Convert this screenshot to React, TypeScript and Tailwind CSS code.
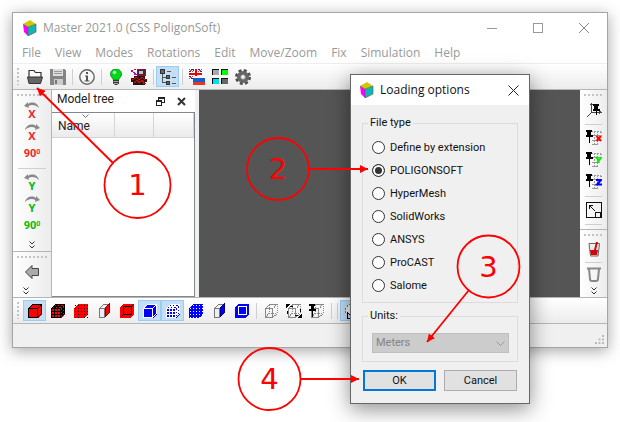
import type { ReactNode } from "react";

const UI = "font-['Open_Sans','Noto_Sans',sans-serif]";
const PANEL = "font-[Roboto,'Liberation_Sans',sans-serif]";

function Svg({ size = 16, children, crisp = true }: { size?: number; children: ReactNode; crisp?: boolean }) {
  return (
    <svg
      width={size}
      height={size}
      viewBox={`0 0 ${size} ${size}`}
      fill="none"
      aria-hidden="true"
      shapeRendering={crisp ? "crispEdges" : "auto"}
      className="shrink-0"
    >
      {children}
    </svg>
  );
}

function LogoCube() {
  return (
    <Svg crisp={false}>
      <path d="M1 4 L6 7 L6 16 L2 12 Z" fill="#f0f" />
      <path d="M6 7 L14 4 L14 12 L6 16 Z" fill="#12b5b5" />
      <path d="M1 4 L8 0 L14 4 L6 7 Z" fill="#d2c800" />
      <path d="M6 7 L14 4 L14 12 L6 16 Z M6 7 L1 4" stroke="#555" strokeWidth="0.6" />
    </Svg>
  );
}

type CubeProps = { fill: string; line: string; kind: "solid" | "grid" | "dots" | "side" | "frame" };

function Cube({ fill, line, kind }: CubeProps) {
  if (kind === "side") {
    return (
      <Svg>
        <path d="M3.5 5.5 H8.5 V14.5 H3.5 Z M3.5 5.5 L7.5 1.5 H12.5" stroke="#777" fill="#eee" />
        <path d="M9 5 L13 1 V10 L9 14 Z" fill={fill} stroke={line} strokeWidth="1" />
      </Svg>
    );
  }
  if (kind === "frame") {
    return (
      <Svg>
        <path d="M1 5 L4 1 H15 V11 L12 15 H1 Z" fill={fill} />
        <path d="M4.5 3.5 H12.5 V11.5 H4.5 Z" stroke={line} />
        {line !== "#fff" && <path d="M12.5 3.5 L14.5 1.5 M1.5 14.5 L4.5 11.5" stroke={line} />}
      </Svg>
    );
  }
  const dots: ReactNode[] = [];
  if (kind === "dots") {
    for (let y = 2; y < 15; y += 3)
      for (let x = 2; x < 15; x += 3)
        dots.push(<rect key={`${x}-${y}`} x={x} y={y} width="1" height="1" fill={line} />);
  }
  return (
    <Svg>
      <path d="M1 5 L5 1 H15 V11 L11 15 H1 Z" fill={fill} />
      {kind !== "dots" && (
        <path d="M1.5 5.5 H10.5 V14.5 H1.5 Z M1.5 5.5 L5.5 1.5 H14.5 V10.5 L10.5 14.5 M10.5 5.5 L14.5 1.5" stroke={line} />
      )}
      {kind === "grid" && (
        <path d="M4.5 5 V15 M7.5 5 V15 M1 8.5 H11 L15 4.5 M1 11.5 H11 L15 7.5 M4.5 5 L8.5 1 M7.5 5 L11.5 1 M3 3.5 H12.5 V13" stroke={line} />
      )}
      {dots}
    </Svg>
  );
}

function GhostCube({ mark }: { mark?: "rotate" | "pin" }) {
  return (
    <Svg>
      <path d="M2.5 5.5 H9.5 V14.5 H2.5 Z M2.5 5.5 L6.5 1.5 H14.5" stroke="#888" />
      <path d="M9.5 5.5 L14.5 1.5 V10.5 L9.5 14.5 M6 2 V10 L3 14 M6 10 H14" stroke="#888" strokeDasharray="1 1" />
      {mark === "rotate" && (
        <path d="M0 1 H5 L0 5 Z M16 15 H11 L16 11 Z M4 3 H7 V4 H4 Z M9 12 H12 V13 H9 Z M14 6 H15 V9 H14 Z M1 8 H2 V11 H1 Z" fill="#000" />
      )}
      {mark === "pin" && <path d="M0 1 H6 V3 H5 V6 H7 V8 H4 V14 H3 V8 H0 V6 H2 V3 H0 Z" fill="#000" />}
    </Svg>
  );
}

function Folder() {
  return (
    <Svg crisp={false}>
      <path d="M2 9 V1.500 H7 L8.500 3.500 H14 V9" stroke="#333" strokeWidth="1.200" fill="#fafafa" />
      <path d="M0.500 8 H15.500 L13.500 14.500 H2 Z" fill="#666" stroke="#333" />
    </Svg>
  );
}

function Floppy() {
  return (
    <Svg>
      <path d="M0 0 H14 L16 2 V16 H0 Z" fill="#858585" />
      <rect x="3" y="0" width="10" height="7" fill="#ddd" />
      <path d="M4 2.500 H12 M4 4.500 H12" stroke="#999" />
      <rect x="4" y="10" width="9" height="6" fill="#ccc" />
      <rect x="5" y="11" width="2" height="4" fill="#777" />
    </Svg>
  );
}

function Info() {
  return (
    <Svg crisp={false}>
      <circle cx="8" cy="8" r="7.200" stroke="#666" strokeWidth="1.400" fill="#f8f8f8" />
      <path d="M7 3 H9 V5 H7 Z M6 6.500 H9 V11.500 H10.500 V12.500 H5.500 V11.500 H7 V7.500 H6 Z" fill="#555" />
    </Svg>
  );
}

function Bulb() {
  return (
    <Svg crisp={false}>
      <path d="M8 0 C4 0 2.500 3 2.500 5 C2.500 8 5 9 5.500 11 H10.500 C11 9 13.500 8 13.500 5 C13.500 3 12 0 8 0 Z" fill="#00d81a" stroke="#087a10" strokeWidth="0.800" />
      <circle cx="6.500" cy="3.500" r="1.800" fill="#b5ffb5" />
      <path d="M5 11 H11 V15 H9.500 V16 H6.500 V15 H5 Z" fill="#333" />
      <path d="M5.500 12.500 H10.500 M5.500 14.500 H10" stroke="#ddd" strokeWidth="0.700" />
    </Svg>
  );
}

function Machine() {
  return (
    <Svg>
      <path d="M6 0 H15 V7 H6 Z" fill="#b00030" />
      <path d="M7 1 H14 V6 H7 Z" fill="#333" />
      <path d="M8 2 H12 V5 H8 Z" fill="#c8c0d8" />
      <path d="M3 7 H14 V10 H16 V13 H14 V16 H2 V13 H0 V9 H3 Z" fill="#271414" />
      <path d="M0 1 H2 V3 H0 Z M3 0 H5 V1 H3 Z M3 5 H5 V6 H3 Z" fill="#e0006a" />
      <path d="M2 11 L5 8 L8 11 L11 8 L14 11 M3 14 L6 11 L8 14 L11 11 L13 14 M1 10 H3 M12 14 H15" stroke="#e00" />
      <path d="M2 3 L6 6" stroke="#a0f" />
    </Svg>
  );
}

function TreeIcon() {
  return (
    <Svg>
      <path d="M2.500 4 V13.500 H6 M3 8.500 H6" stroke="#555" />
      <path d="M0.500 0.500 H4.500 V4.500 H0.500 Z M6.500 6.500 H9.500 V9.500 H6.500 Z M6.500 12.500 H9.500 V15.500 H6.500 Z" fill="#666" stroke="#333" />
      <path d="M7 2.500 H11 M12 8.500 H16 M12 14.500 H16" stroke="#555" />
    </Svg>
  );
}

function Flags() {
  return (
    <Svg>
      <rect width="13" height="10" fill="#17349a" />
      <path d="M0 0 L13 10 M13 0 L0 10" stroke="#fff" strokeWidth="2" />
      <path d="M0 0 L13 10 M13 0 L0 10" stroke="#d11" strokeWidth="0.800" />
      <path d="M6.500 0 V10 M0 5 H13" stroke="#fff" strokeWidth="4" />
      <path d="M6.500 0 V10 M0 5 H13" stroke="#e00" strokeWidth="2" />
      <rect x="4" y="7" width="12" height="2" fill="#f4f4f4" />
      <rect x="4" y="9" width="12" height="4" fill="#1560c8" />
      <rect x="4" y="13" width="12" height="3" fill="#e32" />
    </Svg>
  );
}

function Swatches() {
  return (
    <Svg>
      <path d="M0 6 V0 H7 V1 H1 V6 Z M9 6 V0 H16 V1 H10 V6 Z M0 15 V9 H7 V10 H1 V15 Z M9 15 V9 H16 V10 H10 V15 Z" fill="#111" />
      <rect x="1" y="1" width="6" height="5" fill="#aaa" />
      <rect x="10" y="1" width="6" height="5" fill="#0f0" />
      <rect x="1" y="10" width="6" height="5" fill="#00e0e8" />
      <rect x="10" y="10" width="6" height="5" fill="#666" />
    </Svg>
  );
}

function Gear() {
  return (
    <Svg crisp={false}>
      <circle cx="8" cy="8" r="6.500" stroke="#4c4c4c" strokeWidth="3" strokeDasharray="2.900 2.200" />
      <circle cx="8" cy="8" r="4.300" stroke="#666" strokeWidth="3.600" />
      <circle cx="8" cy="8" r="2.500" fill="#eee" stroke="#444" strokeWidth="0.600" />
    </Svg>
  );
}

function Turn({ axis, back }: { axis: "X" | "Y"; back?: boolean }) {
  const arc = back
    ? "M15 9 C14 4 8 2 4 5 L4 3 L0 7 L5 9 L4.500 7 C8 5 12 6 15 9 Z"
    : "M1 9 C2 4 8 2 12 5 L12 3 L16 7 L11 9 L11.500 7 C8 5 4 6 1 9 Z";
  return (
    <svg width="16" height="22" viewBox="0 0 16 22" aria-hidden="true" className="shrink-0 overflow-visible">
      <path d={arc} fill="#888" />
      <text
        x="8"
        y="19"
        textAnchor="middle"
        className={`font-['Open_Sans',sans-serif] text-[11px] font-bold ${axis === "X" ? "fill-[#e22]" : "fill-[#0b0]"}`}
      >
        {axis}
      </text>
    </svg>
  );
}

function PinAxis({ axis }: { axis: "x" | "y" | "z" }) {
  const glyph = { x: "M10.500 6 L15 11 M15 6 L10.500 11", y: "M10 5 L12.500 8 M15.500 5 L11 11", z: "M10 6 H15 L11 10.500 H16" }[axis];
  const color = { x: "#f00", y: "#0e0", z: "#00f" }[axis];
  return (
    <Svg>
      <path d="M5 1.500 H14 L15.500 3 M8.500 1 V15 M11.500 1 V15 M6 5.500 H16 M6 10.500 H15 M6 14.500 H12" stroke="#999" strokeDasharray="2 1" />
      <path d="M0 0 H6 V2 H5 V5 H7 V7 H4 V13 H3 V7 H0 V5 H1 V2 H0 Z" fill="#000" />
      <path d={glyph} stroke={color} strokeWidth="2" shapeRendering="auto" />
    </Svg>
  );
}

function AxisPin() {
  return (
    <Svg>
      <path d="M5.500 1 V11 M5 10.500 H15 M5.500 10.500 L0.500 15.500 M4 2.500 H7 M13 9 L15 10.500 L13 12" stroke="#444" />
      <path d="M7 2 H13 V4 H12 V7 H14 V9 H11 V13 H10 V9 H7 V7 H8 V4 H7 Z" fill="#000" />
    </Svg>
  );
}

function Fit() {
  return (
    <Svg>
      <path d="M0.500 0.500 H15.500 V15.500 H0.500 Z M9.500 10.500 H14.500 V15 H9.500 Z" stroke="#111" />
      <path d="M3 7 V3 H7 M3 3 L9 9" stroke="#111" strokeWidth="1" />
    </Svg>
  );
}

function Cup({ red }: { red?: boolean }) {
  return (
    <Svg crisp={false}>
      {red ? (
        <>
          <path d="M3 2.500 H13.500 L12 15 H4.500 Z" fill="#eee" stroke="#666" />
          <path d="M4 9 H8 L10 1 L12 1 L10 9 L12 9 L11 14 H5 Z" fill="#d00" />
        </>
      ) : (
        <path d="M1 1.500 H15 M3 2 L4 12 Q4 14 6 14 H10 Q12 14 12 12 L13 2" stroke="#888" strokeWidth="2" />
      )}
    </Svg>
  );
}

function ArrowLeft() {
  return (
    <Svg crisp={false}>
      <path d="M1.500 8 L8 1.500 V4.500 H14.500 V11.500 H8 V14.500 Z" fill="#aaa" stroke="#444" />
    </Svg>
  );
}

function More({ className = "" }: { className?: string }) {
  return (
    <button type="button" aria-label="More tools" className={`flex h-[13px] w-3 items-center justify-center ${className}`}>
      <svg width="6" height="8" viewBox="0 0 6 8" fill="none" stroke="#333" aria-hidden="true">
        <path d="M0.500 0.500 L3 3 L5.500 0.500 M0.500 4.500 L3 7 L5.500 4.500" />
      </svg>
    </button>
  );
}

function Tool({ label, active, children }: { label: string; active?: boolean; children: ReactNode }) {
  return (
    <button
      type="button"
      aria-label={label}
      title={label}
      className={`flex h-[21px] w-[23px] shrink-0 items-center justify-center border ${
        active ? "border-[#99cdf8] bg-[#c4dff4]" : "border-transparent"
      }`}
    >
      {children}
    </button>
  );
}

function RailTool({ label, short, children }: { label: string; short?: boolean; children: ReactNode }) {
  return (
    <button
      type="button"
      aria-label={label}
      title={label}
      className={`flex w-6 shrink-0 items-center justify-center ${short ? "h-5" : "h-[22px]"}`}
    >
      {children}
    </button>
  );
}

function Sep() {
  return (
    <span className="flex w-[6px] shrink-0 justify-center">
      <span className="h-4 w-px bg-[#cfcfcf]" />
    </span>
  );
}

function RailSep() {
  return (
    <span className="flex h-[6px] w-full shrink-0 items-center px-[5px]">
      <span className="h-px w-full bg-[#cfcfcf]" />
    </span>
  );
}

function Grip() {
  return (
    <span className="flex w-[10px] shrink-0 justify-center">
      <span className="my-1 w-[2px] bg-[repeating-linear-gradient(to_bottom,#c4c4c4_0_2px,transparent_2px_4px)]" />
    </span>
  );
}

function RailGrip() {
  return (
    <span className="flex h-[9px] w-full shrink-0 items-center px-1">
      <span className="h-[2px] w-full bg-[repeating-linear-gradient(to_right,#c4c4c4_0_2px,transparent_2px_4px)]" />
    </span>
  );
}

function Ninety({ color }: { color: string }) {
  return (
    <span className={`flex font-[Roboto,sans-serif] text-[11px] leading-4 font-bold ${color}`}>
      90<span className="text-[7px] leading-3">0</span>
    </span>
  );
}

const MENU = ["File", "View", "Modes", "Rotations", "Edit", "Move/Zoom", "Fix", "Simulation", "Help"];
const TYPES = ["Define by extension", "POLIGONSOFT", "HyperMesh", "SolidWorks", "ANSYS", "ProCAST", "Salome"];

function MainWindow() {
  return (
    <main className="flex w-full flex-col border border-[#a5a5a5] bg-[#f0f0f0] shadow-[0_3px_14px_rgba(0,0,0,0.35)]">
      <header className={`flex h-[30px] items-center bg-white pl-[9px] text-[#999] ${UI}`}>
        <LogoCube />
        <h1 className="ml-[5px] flex-1 text-[12px] leading-4">Master 2021.0 (CSS PoligonSoft)</h1>
        <button type="button" aria-label="Minimize" className="flex h-full w-[46px] items-center justify-center">
          <span className="h-px w-[10px] bg-[#999]" />
        </button>
        <button type="button" aria-label="Maximize" className="flex h-full w-[46px] items-center justify-center">
          <span className="size-[10px] border border-[#999]" />
        </button>
        <button type="button" aria-label="Close" className="flex h-full w-[46px] items-center justify-center">
          <svg width="10" height="10" viewBox="0 0 10 10" stroke="#888" aria-hidden="true">
            <path d="M0 0 L10 10 M10 0 L0 10" />
          </svg>
        </button>
      </header>
      <nav className={`flex h-[21px] items-center gap-[14px] border-b border-[#eee] bg-white pl-[9px] text-[12px] leading-4 text-[#999] ${UI}`}>
        {MENU.map((m) => (
          <button type="button" key={m}>
            {m}
          </button>
        ))}
      </nav>
      <div className="flex h-[26px] items-stretch border-b border-[#b5b5b5] bg-linear-to-b from-white to-[#ececec]">
        <Grip />
        <div className="flex items-center">
          <Tool label="Open"><Folder /></Tool>
          <Tool label="Save"><Floppy /></Tool>
          <Sep />
          <Tool label="Info"><Info /></Tool>
          <Sep />
          <Tool label="Light"><Bulb /></Tool>
          <Tool label="Process"><Machine /></Tool>
          <Sep />
          <Tool label="Model tree" active><TreeIcon /></Tool>
          <Sep />
          <Tool label="Language"><Flags /></Tool>
          <Tool label="Colours"><Swatches /></Tool>
          <Tool label="Settings"><Gear /></Tool>
        </div>
      </div>

      <div className="flex">
        <aside className="flex w-[39px] shrink-0 flex-col border-r border-[#b5b5b5] bg-linear-to-r from-white to-[#ececec]">
          <div className="flex flex-col items-center border-b border-[#b5b5b5]">
            <RailGrip />
            <RailTool label="Rotate X back"><Turn axis="X" back /></RailTool>
            <RailTool label="Rotate X"><Turn axis="X" /></RailTool>
            <RailTool label="Rotate X by 90"><Ninety color="text-[#e22]" /></RailTool>
            <RailSep />
            <RailTool label="Rotate Y back"><Turn axis="Y" back /></RailTool>
            <RailTool label="Rotate Y"><Turn axis="Y" /></RailTool>
            <RailTool label="Rotate Y by 90"><Ninety color="text-[#0b0]" /></RailTool>
            <More className="mt-px" />
          </div>
          <div className="flex flex-col items-center">
            <RailGrip />
            <RailTool label="Back"><ArrowLeft /></RailTool>
            <More className="mt-px mr-3" />
          </div>
        </aside>

        <section aria-label="Model tree" className="flex w-[147px] shrink-0 flex-col pr-1">
          <div className={`flex h-[22px] items-center bg-white pr-[9px] pl-[5px] text-[#222] ${PANEL}`}>
            <h2 className="flex-1 pb-1 text-[12px] leading-4">Model tree</h2>
            <button type="button" aria-label="Float" className="mr-3 flex">
              <svg width="9" height="9" viewBox="0 0 9 9" fill="none" stroke="#222" shapeRendering="crispEdges" aria-hidden="true">
                <path d="M0.500 3.500 H5.500 V8.500 H0.500 Z M0 4.500 H6 M2.500 3 V0.500 H8.500 V5.500 H6 M2 1.500 H9" />
              </svg>
            </button>
            <button type="button" aria-label="Close panel" className="flex">
              <svg width="9" height="9" viewBox="0 0 9 9" stroke="#333" strokeWidth="2" aria-hidden="true">
                <path d="M1 1 L8 8 M8 1 L1 8" />
              </svg>
            </button>
          </div>
          <div className="flex flex-1 flex-col border border-l-0 border-[#828790] bg-white">
            <table className="w-full table-fixed border-collapse">
              <thead>
                <tr className={`h-6 bg-linear-to-b from-white to-[#ebebeb] text-left text-[12px] leading-4 text-[#222] ${PANEL}`}>
                  <th scope="col" className="w-[62px] border-r border-b border-[#d5d5d5] pt-[2px] pl-[6px] font-normal">
                    <span className="relative block">
                      Name
                      <svg className="absolute -top-1 left-6" width="7" height="4" viewBox="0 0 7 4" fill="none" stroke="#777" aria-hidden="true">
                        <path d="M0.500 0.500 L3.500 3.500 L6.500 0.500" />
                      </svg>
                    </span>
                  </th>
                  <th scope="col" className="border-r border-b border-[#d5d5d5]" />
                  <th scope="col" className="border-r border-b border-[#d5d5d5]" />
                </tr>
              </thead>
            </table>
          </div>
        </section>

        <div className="flex-1 bg-[#555]" />

        <aside className="flex w-[27px] shrink-0 flex-col bg-linear-to-r from-white to-[#ececec]">
          <div className="flex flex-col items-center border-b border-[#b5b5b5] pb-[2px]">
            <RailGrip />
            <RailTool label="Pin axes"><AxisPin /></RailTool>
            <RailSep />
            <RailTool label="Pin X"><PinAxis axis="x" /></RailTool>
            <RailTool label="Pin Y"><PinAxis axis="y" /></RailTool>
            <RailTool label="Pin Z"><PinAxis axis="z" /></RailTool>
            <RailSep />
            <RailTool label="Fit"><Fit /></RailTool>
            <RailSep />
          </div>
          <div className="flex flex-col items-center">
            <RailGrip />
            <RailTool label="Pour" short><Cup red /></RailTool>
            <RailSep />
            <RailTool label="Mould" short><Cup /></RailTool>
            <More className="-mt-px" />
          </div>
        </aside>
      </div>

      <div className="flex h-[27px] items-stretch border-y border-[#b5b5b5] bg-linear-to-b from-white to-[#ececec]">
        <Grip />
        <div className="flex items-center">
          <Tool label="Solid" active><Cube kind="solid" fill="#f00" line="#000" /></Tool>
          <Tool label="Mesh"><Cube kind="grid" fill="#f00" line="#000" /></Tool>
          <Tool label="Nodes"><Cube kind="dots" fill="#f00" line="#000" /></Tool>
          <Tool label="Side"><Cube kind="side" fill="#f00" line="#800" /></Tool>
          <Tool label="Frame"><Cube kind="frame" fill="#f00" line="#000" /></Tool>
          <Tool label="Blue solid" active><Cube kind="solid" fill="#00f" line="#fff" /></Tool>
          <Tool label="Blue mesh" active><Cube kind="grid" fill="#00f" line="#fff" /></Tool>
          <Tool label="Blue nodes"><Cube kind="dots" fill="#00f" line="#fff" /></Tool>
          <Tool label="Blue side"><Cube kind="side" fill="#00f" line="#008" /></Tool>
          <Tool label="Blue frame"><Cube kind="frame" fill="#00f" line="#fff" /></Tool>
          <Sep />
          <Tool label="Wire"><GhostCube /></Tool>
          <Tool label="Turn"><GhostCube mark="rotate" /></Tool>
          <Tool label="Pin"><GhostCube mark="pin" /></Tool>
          <Sep />
          <Sep />
          <Tool label="View" active>
            <Svg>
              <path d="M1 6 L5 1 H12 V7 L8 10 H2 Z" fill="#eee" stroke="#777" strokeDasharray="2 1" />
              <path d="M3.500 15.500 V9.500 L6 12 L9 9 M3 15.500 H13" stroke="#000" />
            </Svg>
          </Tool>
        </div>
      </div>
      <footer className="flex h-[23px] items-end justify-end p-[3px]">
        <svg width="9" height="9" viewBox="0 0 9 9" fill="#bbb" aria-hidden="true">
          <path d="M7 0h2v2h-2z M3.500 3.500h2v2h-2z M7 3.500h2v2h-2z M0 7h2v2h-2z M3.500 7h2v2h-2z M7 7h2v2h-2z" />
        </svg>
      </footer>
    </main>
  );
}

function LoadingDialog() {
  return (
    <form
      role="dialog"
      aria-label="Loading options"
      onSubmit={(e) => e.preventDefault()}
      className={`absolute top-[74px] left-[350px] w-[180px] border border-[#666] bg-[#f0f0f0] text-[11px] leading-4 text-[#111] shadow-[0_5px_20px_rgba(0,0,0,0.45)] ${PANEL}`}
    >
      <div className={`flex h-[30px] items-center bg-white pr-[10px] pl-2 ${UI}`}>
        <LogoCube />
        <h2 className="ml-[5px] flex-1 text-[12px]">Loading options</h2>
        <button type="button" aria-label="Close dialog" className="flex">
          <svg width="11" height="11" viewBox="0 0 11 11" stroke="#222" aria-hidden="true">
            <path d="M0.500 0.500 L10.500 10.500 M10.500 0.500 L0.500 10.500" />
          </svg>
        </button>
      </div>
      <div className="flex flex-col px-[11px] pt-[10px] pb-3">
        <fieldset className="border border-[#dcdcdc] pr-2 pb-[5px] pl-[9px]">
          <legend className="-ml-1 px-[2px]">File type</legend>
          <div className="flex flex-col pt-[5px]">
            {TYPES.map((t) => (
              <label key={t} className="flex h-[23px] items-center gap-[5px]">
                <input
                  type="radio"
                  name="filetype"
                  defaultChecked={t === "POLIGONSOFT"}
                  className="size-[13px] appearance-none rounded-full border border-[#333] bg-white checked:bg-[#333] checked:shadow-[inset_0_0_0_2px_#fff]"
                />
                {t}
              </label>
            ))}
          </div>
        </fieldset>
        <fieldset className="mt-[5px] border border-[#dcdcdc] pr-2 pb-2 pl-[9px]">
          <legend className="-ml-1 px-[2px]">
            <label htmlFor="units">Units:</label>
          </legend>
          <div className="relative mt-[9px]">
            <select
              id="units"
              disabled
              className="block h-5 w-full appearance-none border border-[#bfbfbf] bg-[#ccc] pl-[3px] text-[11px] leading-4 text-[#838383] opacity-100"
            >
              <option>Meters</option>
            </select>
            <svg className="pointer-events-none absolute top-2 right-1" width="9" height="5" viewBox="0 0 9 5" fill="none" stroke="#999" aria-hidden="true">
              <path d="M0.500 0.500 L4.500 4.500 L8.500 0.500" />
            </svg>
          </div>
        </fieldset>
        <div className="mt-2 grid grid-cols-2 gap-2 px-px">
          <button type="submit" className="h-[21px] border-2 border-[#0078d7] bg-[#e1e1e1]">
            OK
          </button>
          <button type="button" className="h-[21px] border border-[#adadad] bg-[#e1e1e1]">
            Cancel
          </button>
        </div>
      </div>
    </form>
  );
}

const CALLOUTS = [
  { n: 1, cx: 137.5, cy: 185, r: 33, x1: 113, y1: 163, x2: 37, y2: 88 },
  { n: 2, cx: 278, cy: 169, r: 31, x1: 309, y1: 169, x2: 368, y2: 169 },
  { n: 3, cx: 488.5, cy: 266.500, r: 31, x1: 469, y1: 290, x2: 427, y2: 342 },
  { n: 4, cx: 269.5, cy: 379, r: 31, x1: 300, y1: 379, x2: 359, y2: 379 },
];

function Callouts() {
  return (
    <svg className="pointer-events-none absolute top-0 left-0" width="620" height="422" viewBox="0 0 620 422" fill="none">
      <defs>
        <marker id="tip" markerWidth="8" markerHeight="8" refX="8" refY="4" orient="auto" markerUnits="userSpaceOnUse">
          <path d="M0 0 L8 4 L0 8 Z" fill="#f00" />
        </marker>
      </defs>
      {CALLOUTS.map((c) => (
        <g key={c.n} stroke="#f00" strokeWidth="1.800">
          <circle cx={c.cx} cy={c.cy} r={c.r} />
          <path d={`M${c.x1} ${c.y1} L${c.x2} ${c.y2}`} markerEnd="url(#tip)" />
          <text
            x={c.cx}
            y={c.cy + 10}
            textAnchor="middle"
            stroke="none"
            className="fill-[#f00] font-['DejaVu_Sans',sans-serif] text-[29px]"
          >
            {c.n}
          </text>
        </g>
      ))}
    </svg>
  );
}

export default function App() {
  return (
    <div className="relative min-h-screen w-full overflow-hidden bg-white p-3">
      <MainWindow />
      <LoadingDialog />
      <Callouts />
    </div>
  );
}
